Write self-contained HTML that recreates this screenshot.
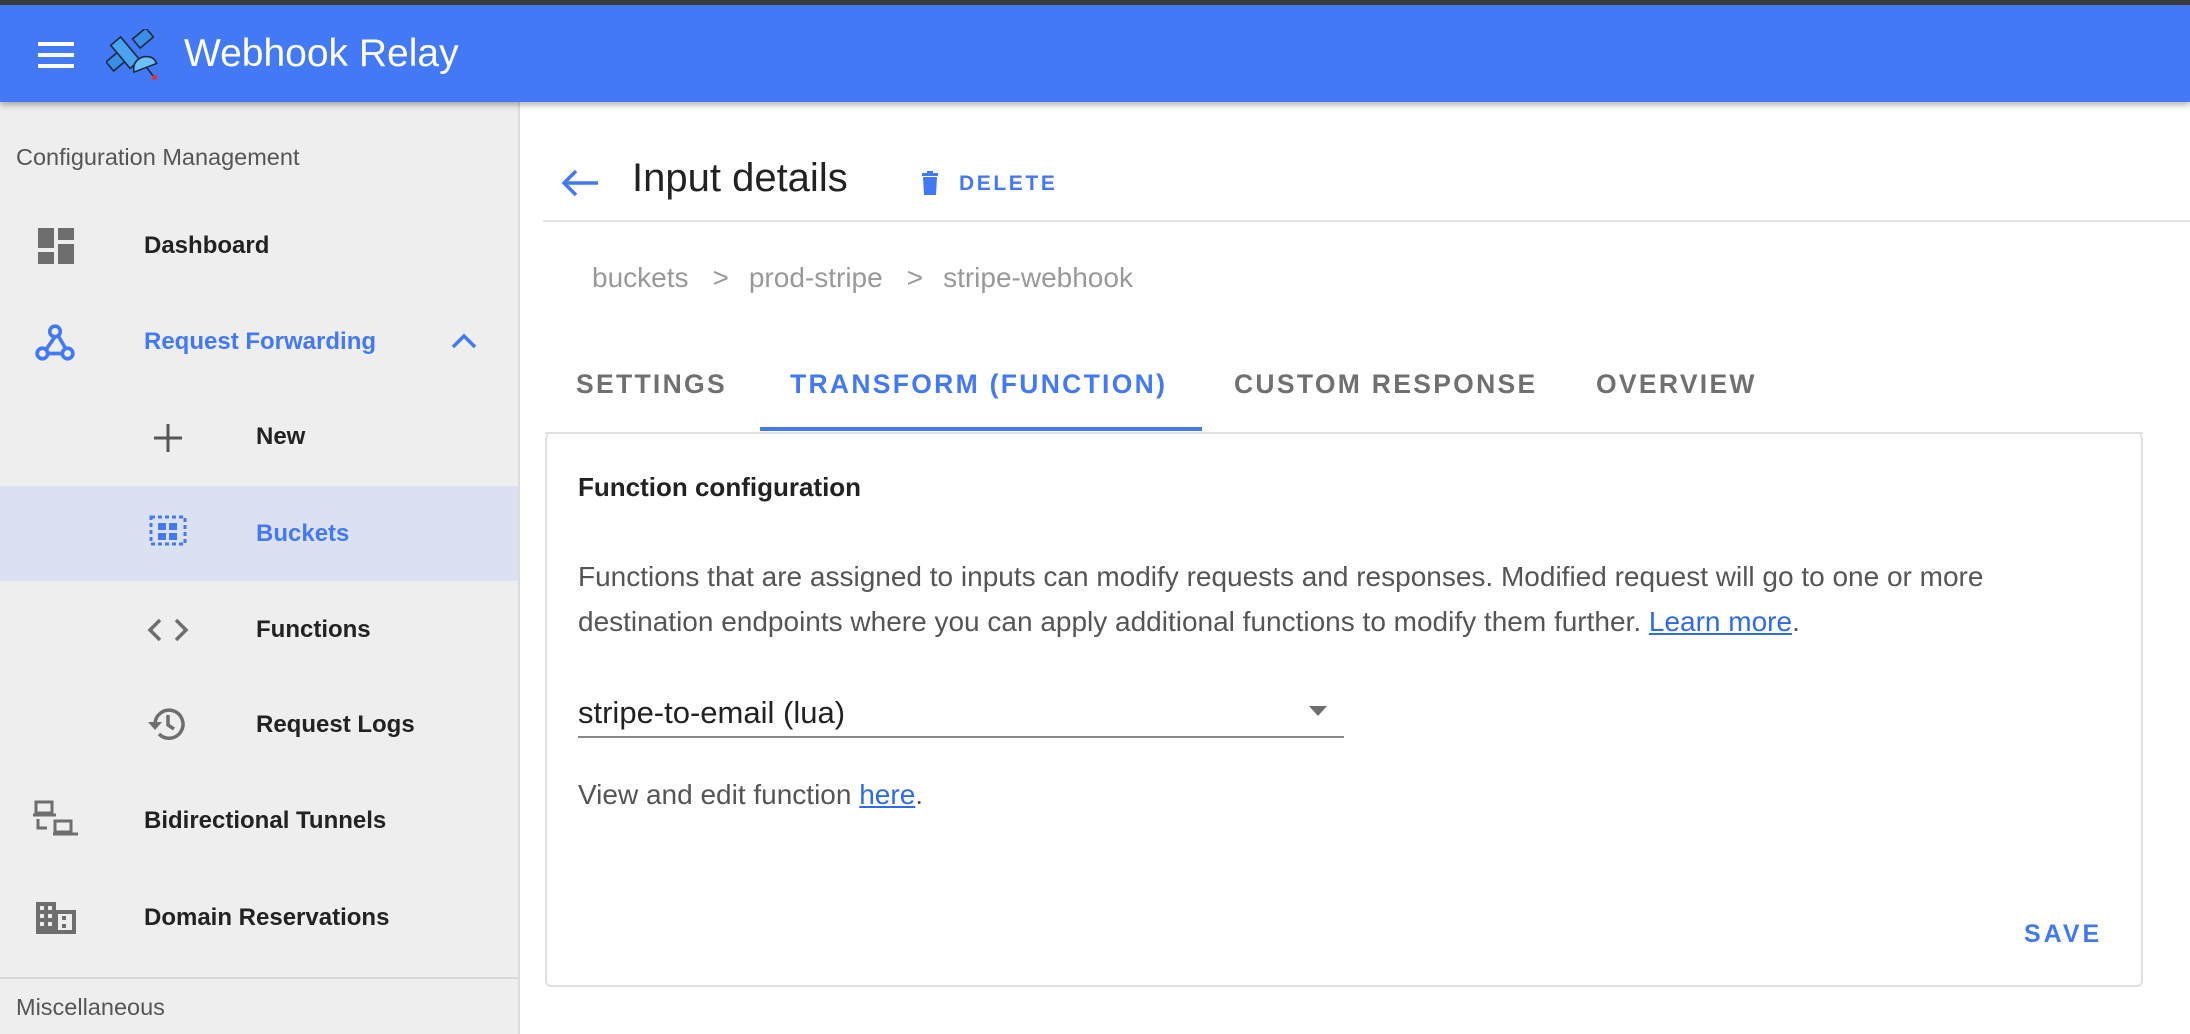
<!DOCTYPE html>
<html><head><meta charset="utf-8"><style>
*{margin:0;padding:0;box-sizing:border-box}
body{width:2190px;height:1034px;overflow:hidden;background:#fff;font-family:"Liberation Sans",sans-serif;position:relative}
.abs{position:absolute;white-space:nowrap}
.topbar{position:absolute;left:0;top:0;width:2190px;height:5px;background:#3a3b3f}
.header{position:absolute;left:0;top:5px;width:2190px;height:97px;background:#4479f5;box-shadow:0 3px 6px rgba(0,0,0,.3);z-index:2}
.side{position:absolute;left:0;top:102px;width:520px;height:932px;background:#eeeeee;border-right:2px solid #dcdcdc}
.item{position:absolute;font-size:24px;font-weight:bold;color:#222;transform:translateY(-50%)}
.blue{color:#4479f5}
.tab{position:absolute;top:369px;font-size:26.5px;letter-spacing:2.3px;color:#707070;font-weight:bold;}
.p{font-size:28px;color:#555}
a{color:#2f6ae8;text-decoration:underline}
</style></head><body>
<div class="topbar"></div>
<div class="header">
 <div class="abs" style="left:38px;top:37px;width:36px;height:4px;background:#fff"></div>
 <div class="abs" style="left:38px;top:48px;width:36px;height:4px;background:#fff"></div>
 <div class="abs" style="left:38px;top:59px;width:36px;height:4px;background:#fff"></div>
 <svg class="abs" style="left:106px;top:24px" width="56" height="56" viewBox="0 0 52 52">
  <g stroke="#1b2a44" stroke-width="1.5">
   <rect x="2" y="24" width="16" height="11" fill="#3a8ee6" transform="rotate(-40 10 30)"/>
   <rect x="26" y="3" width="16" height="11" fill="#3a8ee6" transform="rotate(-40 34 8)"/>
   <rect x="12" y="8" width="12" height="28" fill="#4aa3ee" transform="rotate(-40 18 22)"/>
   <path d="M26 40 Q24 30 34 26 Q44 24 47 32 Z" fill="#6cc0f5"/>
   <line x1="38" y1="36" x2="44" y2="44"/>
  </g>
  <circle cx="45" cy="45" r="2.5" fill="#d33"/>
 </svg>
 <div class="abs" style="left:184px;top:27px;font-size:39px;color:#fff">Webhook Relay</div>
</div>

<div class="side">
 <div class="abs" style="left:16px;top:42px;font-size:23.5px;color:#555">Configuration Management</div>
 <div class="abs" style="left:38px;top:126px;width:16px;height:20px;background:#6e6e6e"></div>
 <div class="abs" style="left:58px;top:126px;width:16px;height:12px;background:#6e6e6e"></div>
 <div class="abs" style="left:38px;top:150px;width:16px;height:12px;background:#6e6e6e"></div>
 <div class="abs" style="left:58px;top:142px;width:16px;height:20px;background:#6e6e6e"></div>
 <div class="item" style="left:144px;top:144px">Dashboard</div>
 <svg class="abs" style="left:34px;top:220px" width="42" height="42" viewBox="0 0 40 40" fill="none" stroke="#4479f5" stroke-width="3.5">
  <circle cx="20" cy="9" r="5"/><circle cx="8" cy="30" r="5"/><circle cx="32" cy="30" r="5"/>
  <path d="M20 14 L11 27 M13 30 H27 M23 13 L30 25"/>
 </svg>
 <div class="item blue" style="left:144px;top:240px">Request Forwarding</div>
 <svg class="abs" style="left:450px;top:230px" width="28" height="18" viewBox="0 0 28 18"><path d="M3 15 L14 4 L25 15" stroke="#4479f5" stroke-width="3.5" fill="none"/></svg>
 <svg class="abs" style="left:152px;top:320px" width="32" height="32" viewBox="0 0 32 32"><path d="M16 2V30M2 16H30" stroke="#555" stroke-width="3"/></svg>
 <div class="item" style="left:256px;top:335px">New</div>
 <div class="abs" style="left:0;top:384px;width:518px;height:95px;background:#dbe1f1"></div>
 <svg class="abs" style="left:149px;top:413px" width="38" height="38" viewBox="0 0 38 38" fill="#4479f5">
  <g stroke="#4479f5" stroke-width="3" stroke-dasharray="4 3" fill="none"><rect x="2" y="2" width="34" height="27"/></g>
  <rect x="9" y="8" width="8" height="7"/><rect x="20" y="8" width="8" height="7"/><rect x="9" y="18" width="8" height="7"/><rect x="20" y="18" width="8" height="7"/>
 </svg>
 <div class="item blue" style="left:256px;top:432px">Buckets</div>
 <svg class="abs" style="left:146px;top:512px" width="44" height="32" viewBox="0 0 44 32"><path d="M14 6L4 16L14 26M30 6L40 16L30 26" stroke="#6e6e6e" stroke-width="3.5" fill="none"/></svg>
 <div class="item" style="left:256px;top:528px">Functions</div>
 <svg class="abs" style="left:146px;top:602px" width="42" height="40" viewBox="0 0 42 40" fill="none" stroke="#6e6e6e" stroke-width="3.5">
  <path d="M9 20 A14 14 0 1 1 13 30"/><path d="M22 11V21L28 25"/>
  <path d="M2 18 L9 26 L16 18 Z" fill="#6e6e6e" stroke="none"/>
 </svg>
 <div class="item" style="left:256px;top:623px">Request Logs</div>
 <svg class="abs" style="left:33px;top:698px" width="46" height="40" viewBox="0 0 46 40" fill="none" stroke="#6e6e6e" stroke-width="3">
  <rect x="3" y="2" width="16" height="11"/><path d="M0 15H23" /><path d="M5 19V28H14"/>
  <rect x="22" y="21" width="16" height="11"/><path d="M20 34H45"/>
 </svg>
 <div class="item" style="left:144px;top:719px">Bidirectional Tunnels</div>
 <svg class="abs" style="left:36px;top:800px" width="40" height="32" viewBox="0 0 40 32" fill="#6e6e6e">
  <path d="M0 0H20V8H40V32H0Z"/>
  <g fill="#eee"><rect x="4" y="4" width="4" height="4"/><rect x="12" y="4" width="4" height="4"/><rect x="4" y="12" width="4" height="4"/><rect x="12" y="12" width="4" height="4"/><rect x="4" y="20" width="4" height="4"/><rect x="12" y="20" width="4" height="4"/><rect x="22" y="12" width="14" height="16"/></g>
  <rect x="26" y="14" width="4" height="4"/><rect x="26" y="22" width="4" height="4"/>
 </svg>
 <div class="item" style="left:144px;top:816px">Domain Reservations</div>
 <div class="abs" style="left:0;top:875px;width:518px;height:2px;background:#d8d8d8"></div>
 <div class="abs" style="left:16px;top:892px;font-size:23.5px;color:#555">Miscellaneous</div>
</div>

<svg class="abs" style="left:560px;top:168px" width="40" height="30" viewBox="0 0 40 30"><path d="M38 15H4M16 3L4 15L16 27" stroke="#4479f5" stroke-width="3.5" fill="none"/></svg>
<div class="abs" style="left:632px;top:156px;font-size:40px;color:#222">Input details</div>
<svg class="abs" style="left:921px;top:171px" width="18" height="24" viewBox="0 0 18 24" fill="#4479f5"><rect x="1" y="2" width="16" height="3"/><rect x="6" y="0" width="6" height="3"/><path d="M2 6H16L15 24H3Z"/></svg>
<div class="abs" style="left:959px;top:172px;font-size:21px;color:#4479f5;letter-spacing:2.6px;font-weight:bold">DELETE</div>
<div class="abs" style="left:543px;top:220px;width:1647px;height:2px;background:#e2e2e2"></div>
<div class="abs" style="left:592px;top:262px;font-size:28px;color:#999">buckets<span style="margin:0 20px 0 24px">&gt;</span>prod-stripe<span style="margin:0 20px 0 24px">&gt;</span>stripe-webhook</div>
<div class="tab" style="left:576px">SETTINGS</div>
<div class="tab" style="left:790px;color:#4479f5">TRANSFORM (FUNCTION)</div>
<div class="tab" style="left:1234px">CUSTOM RESPONSE</div>
<div class="tab" style="left:1596px">OVERVIEW</div>
<div class="abs" style="left:760px;top:427px;width:442px;height:4px;background:#4479f5"></div>
<div class="abs" style="left:545px;top:433px;width:1598px;height:554px;border:2px solid #e0e0e0;border-radius:6px;border-top:none"></div>
<div class="abs" style="left:545px;top:432px;width:1598px;height:2px;background:#e0e0e0"></div>
<div class="abs" style="left:578px;top:472px;font-size:26px;font-weight:bold;color:#222">Function configuration</div>
<div class="abs p" style="left:578px;top:561px">Functions that are assigned to inputs can modify requests and responses. Modified request will go to one or more</div>
<div class="abs p" style="left:578px;top:606px">destination endpoints where you can apply additional functions to modify them further. <a>Learn more</a>.</div>
<div class="abs" style="left:578px;top:695px;font-size:31px;color:#222">stripe-to-email (lua)</div>
<div class="abs" style="left:1309px;top:706px;width:0;height:0;border-left:9px solid transparent;border-right:9px solid transparent;border-top:10px solid #6e6e6e"></div>
<div class="abs" style="left:578px;top:736px;width:766px;height:2px;background:#888"></div>
<div class="abs p" style="left:578px;top:779px">View and edit function <a>here</a>.</div>
<div class="abs" style="left:2024px;top:920px;font-size:25px;color:#4479f5;letter-spacing:3px;font-weight:bold">SAVE</div>
</body></html>
